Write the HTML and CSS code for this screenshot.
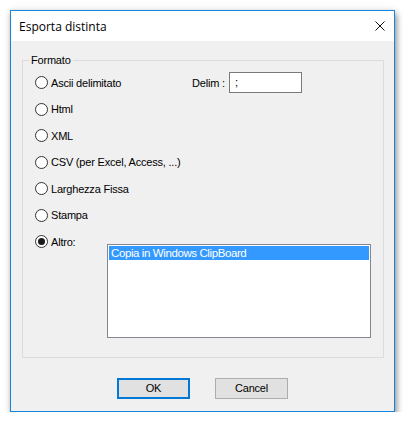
FILE: index.html
```html
<!DOCTYPE html>
<html>
<head>
<meta charset="utf-8">
<link rel="stylesheet" href="styles.css">
</head>
<body>
<div class="window">
  <div class="titlebar">
    <span class="title">Esporta distinta</span>
    <svg class="close" width="10" height="10" viewBox="0 0 10 10"><path d="M0.5 0.5 L9.5 9.5 M9.5 0.5 L0.5 9.5" stroke="#111" stroke-width="1" fill="none"/></svg>
  </div>
  <div class="content">
    <div class="group">
      <span class="legend">Formato</span>
      <div class="rows">
        <div class="row">
          <span class="radio"></span><span class="lbl first">Ascii delimitato</span>
          <span class="delim">Delim :</span><span class="input">;</span>
        </div>
        <div class="row"><span class="radio"></span><span class="lbl">Html</span></div>
        <div class="row"><span class="radio"></span><span class="lbl">XML</span></div>
        <div class="row"><span class="radio"></span><span class="lbl">CSV (per Excel, Access, ...)</span></div>
        <div class="row"><span class="radio"></span><span class="lbl">Larghezza Fissa</span></div>
        <div class="row"><span class="radio"></span><span class="lbl">Stampa</span></div>
        <div class="row"><span class="radio checked"></span><span class="lbl">Altro:</span></div>
      </div>
      <div class="listbox">
        <div class="item selected">Copia in Windows ClipBoard</div>
      </div>
    </div>
    <div class="buttons">
      <div class="btn default">OK</div>
      <div class="btn">Cancel</div>
    </div>
  </div>
</div>
</body>
</html>
```
FILE: styles.css
```css
html, body {
  margin: 0;
  padding: 0;
  background: #ffffff;
}
body {
  padding: 10px 0 0 10px;
  font-family: "Liberation Sans", Arial, sans-serif;
  font-size: 11px;
  letter-spacing: -0.2px;
  color: #000;
}
.window {
  width: 383px;
  height: 400px;
  border: 1px solid #1883d7;
  background: #f0f0f0;
  box-shadow: 0 0 7px rgba(0,0,0,0.12), 2px 4px 6px rgba(0,0,0,0.38);
  display: flex;
  flex-direction: column;
}
.titlebar {
  height: 30px;
  background: #ffffff;
  display: flex;
  align-items: center;
  padding-left: 8px;
  padding-right: 9px;
}
.title {
  font-family: "Open Sans", "Noto Sans", sans-serif;
  font-size: 12px;
  letter-spacing: 0;
  flex: 1;
  color: #000;
}
.close {
  display: block;
}
.content {
  flex: 1;
  padding: 19px 0 0 11px;
}
.group {
  position: relative;
  width: 360px;
  height: 296px;
  border: 1px solid #dcdcdc;
}
.legend {
  position: absolute;
  left: 6px;
  top: -8px;
  padding: 0 2px;
  background: #f0f0f0;
  line-height: 14px;
}
.rows {
  display: flex;
  flex-direction: column;
  gap: 13.5px;
  padding: 15px 0 0 12px;
}
.row {
  height: 13px;
  display: flex;
  align-items: center;
  white-space: nowrap;
}
.radio {
  width: 11px;
  height: 11px;
  border: 1px solid #333;
  border-radius: 50%;
  background: #fff;
  flex: none;
  position: relative;
}
.radio.checked::after {
  content: "";
  position: absolute;
  left: 2px;
  top: 2px;
  width: 7px;
  height: 7px;
  border-radius: 50%;
  background: #1a1a1a;
}
.lbl {
  margin-left: 3px;
}
.lbl.first {
  width: 141px;
  flex: none;
}
.delim {
  width: 37px;
  flex: none;
}
.input {
  width: 66px;
  height: 19px;
  border: 1px solid #7a7a7a;
  background: #fff;
  padding-left: 5px;
  line-height: 19px;
  box-sizing: content-box;
  margin-top: -1px;
  flex: none;
}
.listbox {
  margin: -4px 0 0 84px;
  border: 1px solid #828790;
  background: #fff;
  padding: 1px;
  box-sizing: content-box;
  width: 260px;
  height: 90px;
}
.item {
  height: 14px;
  line-height: 14px;
  padding-left: 2px;
  font-size: 11.5px;
  letter-spacing: -0.4px;
}
.item.selected {
  background: #3399ff;
  color: #fff;
}
.buttons {
  display: flex;
  justify-content: center;
  gap: 25px;
  margin-top: 20px;
  padding-right: 11px;
}
.btn {
  width: 71px;
  height: 19px;
  border: 1px solid #adadad;
  background: #e1e1e1;
  text-align: center;
  line-height: 19px;
  font-size: 11px;
}
.btn.default {
  border: 2px solid #0078d7;
  width: 69px;
  height: 17px;
  line-height: 17px;
}
```
